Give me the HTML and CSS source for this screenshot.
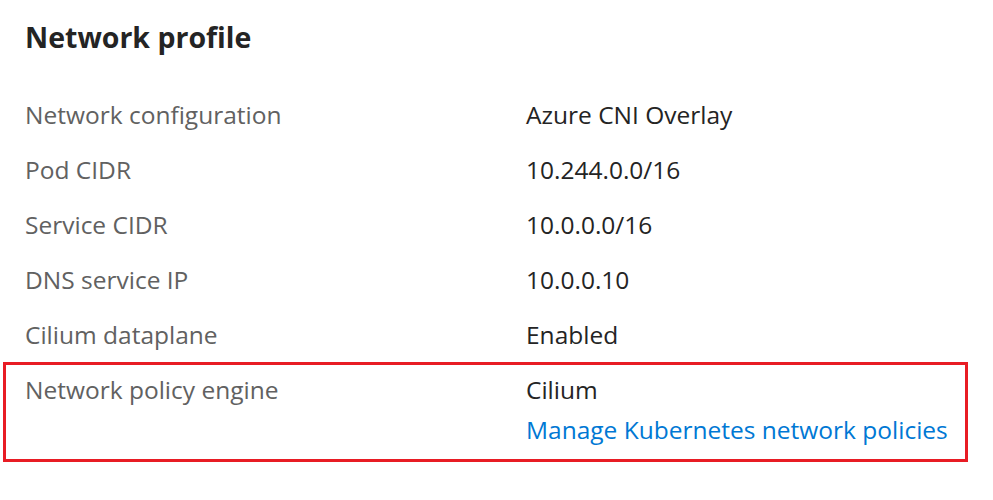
FILE: index.html
```html
<!DOCTYPE html>
<html lang="en">
<head>
<meta charset="utf-8">
<title>Network profile</title>
<link rel="stylesheet" href="styles.css">
</head>
<body>
<section class="profile">
  <h2 class="title">Network profile</h2>
  <div class="props">
    <div class="row"><div class="label">Network configuration</div><div class="value">Azure CNI Overlay</div></div>
    <div class="row"><div class="label">Pod CIDR</div><div class="value">10.244.0.0/16</div></div>
    <div class="row"><div class="label">Service CIDR</div><div class="value">10.0.0.0/16</div></div>
    <div class="row"><div class="label">DNS service IP</div><div class="value">10.0.0.10</div></div>
    <div class="row"><div class="label">Cilium dataplane</div><div class="value">Enabled</div></div>
    <div class="row highlight">
      <div class="label">Network policy engine</div>
      <div class="value">
        <div>Cilium</div>
        <a class="link" href="#">Manage Kubernetes network policies</a>
      </div>
    </div>
  </div>
</section>
</body>
</html>
```

FILE: styles.css
```css
html, body {
  margin: 0;
  padding: 0;
  background: #ffffff;
}

body {
  font-family: "Open Sans", "Noto Sans", "Liberation Sans", sans-serif;
  color: #323130;
}

.profile {
  padding-left: 25px;
}

.title {
  margin: 0 0 32px 0;
  padding-top: 19px;
  font-size: 28.5px;
  line-height: 36px;
  font-weight: 700;
  color: #242424;
}

.props {
  display: flex;
  flex-direction: column;
}

.row {
  display: grid;
  grid-template-columns: 501px auto;
  font-size: 24.5px;
  line-height: 55px;
}

.label {
  color: #616161;
}

.value {
  color: #242424;
}

.highlight {
  margin-left: -22px;
  width: 940px;
  border: 3px solid #e81c24;
  padding: 0 0 14px 19px;
  line-height: 50px;
}

.link {
  display: block;
  line-height: 30px;
  color: #0078d4;
  text-decoration: none;
}
```
